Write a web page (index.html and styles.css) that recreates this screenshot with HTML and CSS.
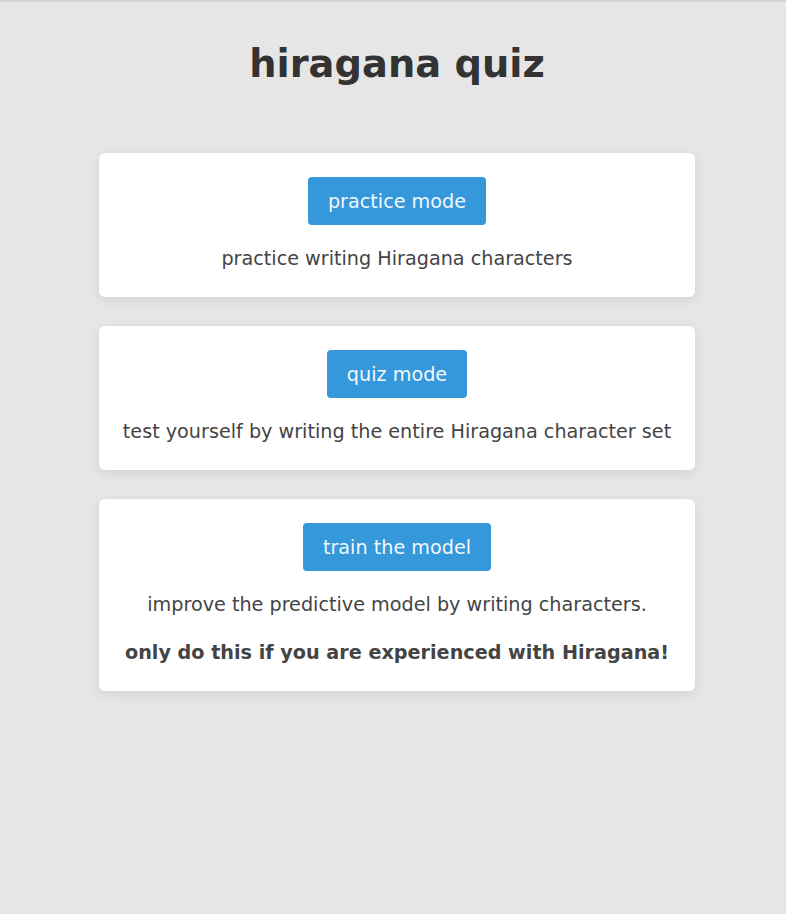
FILE: index.html
```html
<!DOCTYPE html>
<html lang="en">
<head>
<meta charset="utf-8">
<title>hiragana quiz</title>
<link rel="stylesheet" href="styles.css">
</head>
<body>
<main class="page">
  <h1 class="title">hiragana quiz</h1>
  <section class="card">
    <button class="btn" type="button">practice mode</button>
    <p class="desc">practice writing Hiragana characters</p>
  </section>
  <section class="card">
    <button class="btn" type="button">quiz mode</button>
    <p class="desc">test yourself by writing the entire Hiragana character set</p>
  </section>
  <section class="card">
    <button class="btn" type="button">train the model</button>
    <p class="desc">improve the predictive model by writing characters.</p>
    <p class="desc warn">only do this if you are experienced with Hiragana!</p>
  </section>
</main>
</body>
</html>
```

FILE: styles.css
```css
html {
  background: #e6e6e6;
  border-top: 2px solid #d2d2d2;
}
body {
  margin: 0;
  font-family: "DejaVu Sans", sans-serif;
  color: #444;
}
.page {
  display: flex;
  flex-direction: column;
  align-items: center;
  padding: 39px 0 40px 8px;
}
.title {
  margin: 0 0 67px;
  font-size: 38.4px;
  font-weight: bold;
  line-height: 45px;
  color: #333;
}
.card {
  width: 596px;
  box-sizing: border-box;
  background: #fff;
  border-radius: 6px;
  box-shadow: 0 3px 12px rgba(0, 0, 0, 0.09);
  padding: 24px 20px 27px;
  margin-bottom: 29px;
  display: flex;
  flex-direction: column;
  align-items: center;
  text-align: center;
}
.btn {
  font-family: "DejaVu Sans", sans-serif;
  font-size: 19.2px;
  line-height: 22px;
  padding: 14px 20px 12px;
  border: 0;
  border-radius: 4px;
  background: #3498db;
  color: #f2f7fc;
  cursor: pointer;
}
.desc {
  margin: 23px 0 0;
  font-size: 19.2px;
  line-height: 22px;
}
.desc + .desc {
  margin-top: 26px;
}
.warn {
  font-weight: bold;
}
```
